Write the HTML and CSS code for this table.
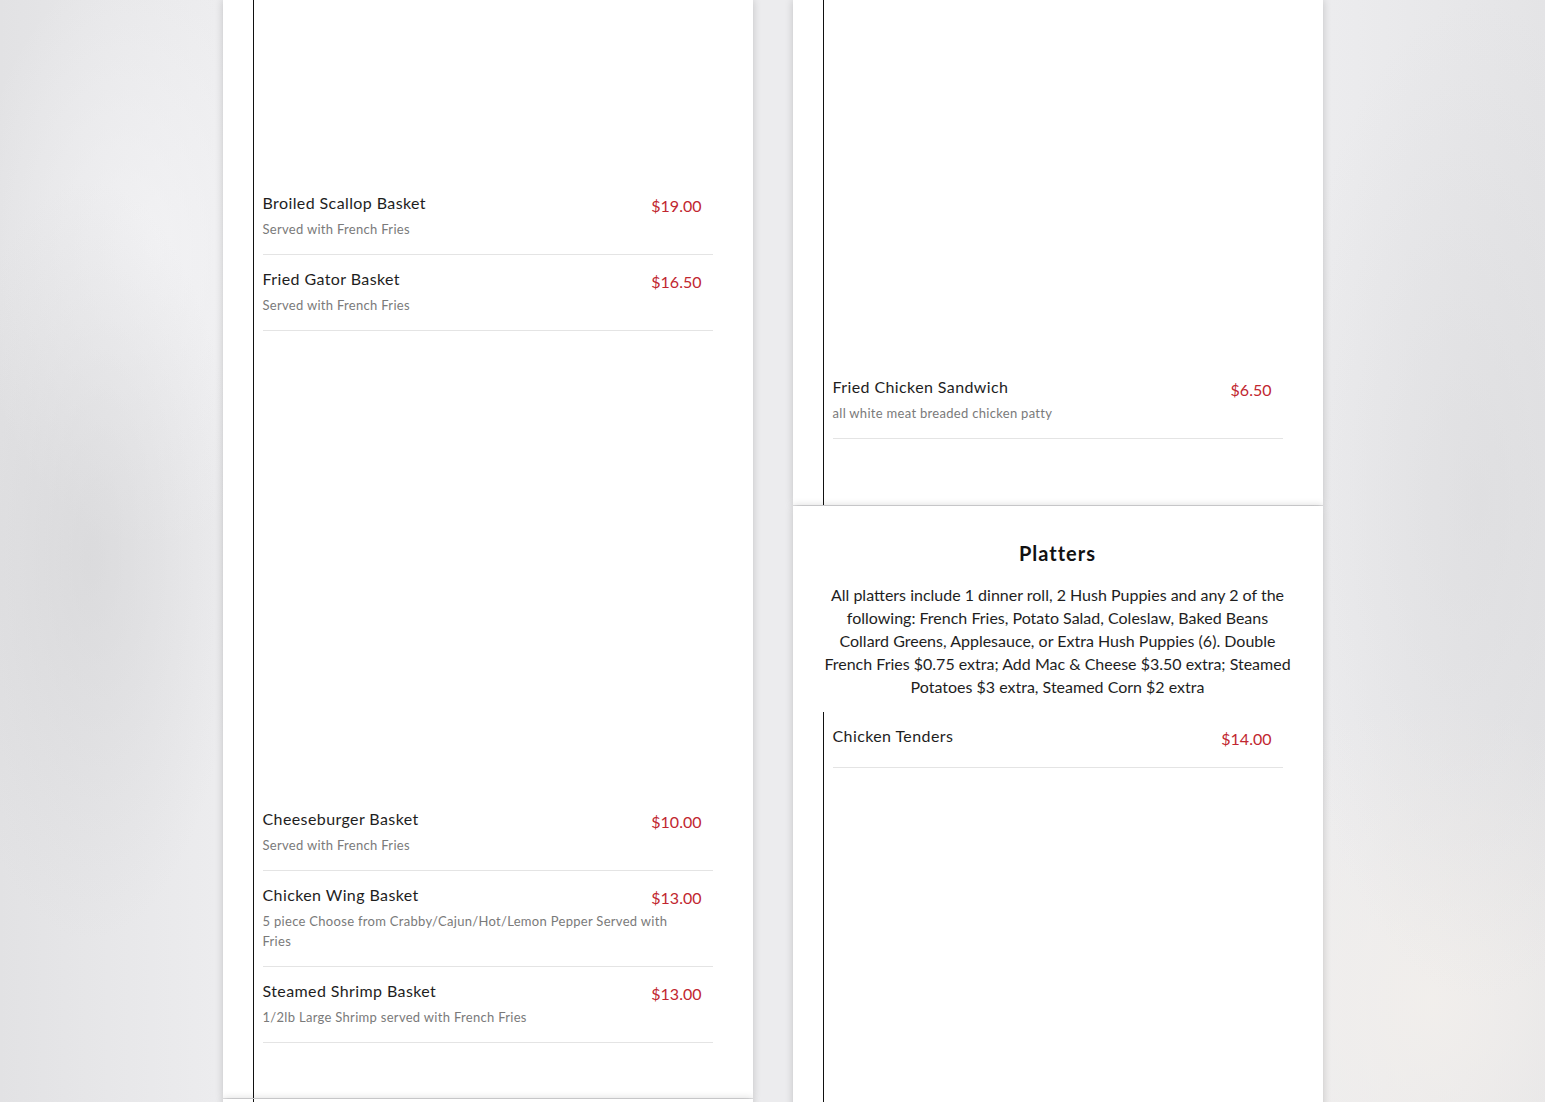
FILE: index.html
```html
<!DOCTYPE html>
<html lang="en">

<head>
    <meta charset="UTF-8">
    <meta name="viewport" content="width=device-width, initial-scale=1.0">
    <title>Menu</title>
    <link rel="stylesheet" href="styles.css">
</head>

<body>
    <div class="menu">
        <!-- left column -->
        <div class="column">
            <div class="card">
                <div class="list">
                    <div class="gap gap-top-left"></div>
                    <div class="item">
                        <div class="name">Broiled Scallop Basket</div>
                        <div class="price">$19.00</div>
                        <div class="desc">Served with French Fries</div>
                    </div>
                    <div class="item">
                        <div class="name">Fried Gator Basket</div>
                        <div class="price">$16.50</div>
                        <div class="desc">Served with French Fries</div>
                    </div>
                    <div class="gap gap-mid-left"></div>
                    <div class="item">
                        <div class="name">Cheeseburger Basket</div>
                        <div class="price">$10.00</div>
                        <div class="desc">Served with French Fries</div>
                    </div>
                    <div class="item">
                        <div class="name">Chicken Wing Basket</div>
                        <div class="price">$13.00</div>
                        <div class="desc">5 piece Choose from Crabby/Cajun/Hot/Lemon Pepper Served with Fries</div>
                    </div>
                    <div class="item">
                        <div class="name">Steamed Shrimp Basket</div>
                        <div class="price">$13.00</div>
                        <div class="desc">1/2lb Large Shrimp served with French Fries</div>
                    </div>
                    <div class="gap gap-bottom-left"></div>
                </div>
            </div>
            <div class="card">
                <div class="list">
                    <div class="gap gap-next"></div>
                </div>
            </div>
        </div>

        <!-- right column -->
        <div class="column">
            <div class="card">
                <div class="list">
                    <div class="gap gap-top-right"></div>
                    <div class="item">
                        <div class="name">Fried Chicken Sandwich</div>
                        <div class="price">$6.50</div>
                        <div class="desc">all white meat breaded chicken patty</div>
                    </div>
                    <div class="gap gap-bottom-right"></div>
                </div>
            </div>
            <div class="card">
                <h2 class="section-title">Platters</h2>
                <p class="section-desc">All platters include 1 dinner roll, 2 Hush Puppies and any 2 of the following: French Fries, Potato Salad, Coleslaw, Baked Beans Collard Greens, Applesauce, or Extra Hush Puppies (6). Double French Fries $0.75 extra; Add Mac &amp; Cheese $3.50 extra; Steamed Potatoes $3 extra, Steamed Corn $2 extra</p>
                <div class="list">
                    <div class="item">
                        <div class="name">Chicken Tenders</div>
                        <div class="price">$14.00</div>
                    </div>
                    <div class="gap gap-platters"></div>
                </div>
            </div>
        </div>
    </div>
</body>

</html>
```

FILE: styles.css
```css
html,
body {
    margin: 0;
    padding: 0;
    height: 1102px;
    overflow: hidden;
}

body {
    font-family: "Lato", "Liberation Sans", sans-serif;
    color: #222;
    background-color: #e8e8ea;
    background-image:
        radial-gradient(ellipse 150px 380px at 90px 560px, rgba(205, 205, 207, 0.45), transparent),
        radial-gradient(ellipse 180px 300px at 150px 250px, rgba(245, 245, 247, 0.7), transparent),
        radial-gradient(ellipse 200px 500px at 1480px 500px, rgba(215, 215, 217, 0.45), transparent),
        radial-gradient(ellipse 260px 300px at 1430px 1000px, rgba(242, 239, 236, 0.9), transparent),
        linear-gradient(to right, #e2e2e4 0%, #ececee 14%, #ececee 86%, #e4e4e6 100%);
}

.menu {
    display: flex;
    justify-content: center;
    gap: 40px;
}

.column {
    width: 530px;
    display: flex;
    flex-direction: column;
    gap: 1px;
}

.card {
    background: #fff;
    padding: 0 40px 0 30px;
    box-shadow: 0 0 8px rgba(0, 0, 0, 0.18);
}

.list {
    border-left: 1px solid #111;
    padding-left: 9px;
}

.gap-top-left {
    height: 179px;
}

.gap-mid-left {
    height: 464px;
}

.gap-bottom-left {
    height: 55px;
}

.gap-next {
    height: 200px;
}

.gap-top-right {
    height: 363px;
}

.gap-bottom-right {
    height: 66px;
}

.gap-platters {
    height: 400px;
}

.item {
    display: grid;
    grid-template-columns: 1fr auto;
    column-gap: 20px;
    align-items: start;
    padding: 12px 11px 15px 0;
    border-bottom: 1px solid #e4e4e4;
}

.name {
    font-size: 16px;
    line-height: 24px;
    letter-spacing: 0.4px;
    color: #1e1e1e;
}

.price {
    padding-top: 1px;
    font-size: 16px;
    line-height: 27px;
    color: #c1262f;
}

.desc {
    grid-column: 1 / -1;
    padding-right: 12px;
    font-size: 13px;
    line-height: 20px;
    letter-spacing: 0.3px;
    color: #7a7a7a;
}

.section-title {
    margin: 0 -10px 0 0;
    padding-top: 35px;
    text-align: center;
    font-size: 20px;
    line-height: 24px;
    font-weight: 700;
    letter-spacing: 1px;
    color: #111;
}

.section-desc {
    margin: 18px -10px 14px 0;
    text-align: center;
    font-size: 16px;
    line-height: 23px;
    color: #1e1e1e;
}
```
